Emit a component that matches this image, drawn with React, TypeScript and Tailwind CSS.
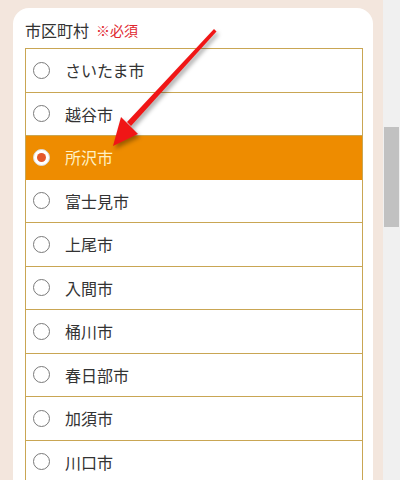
import React from 'react';

const cities = [
  'さいたま市',
  '越谷市',
  '所沢市',
  '富士見市',
  '上尾市',
  '入間市',
  '桶川市',
  '春日部市',
  '加須市',
  '川口市',
];

function Radio({ checked }: { checked: boolean }) {
  if (checked) {
    return (
      <span className="flex h-[17px] w-[17px] shrink-0 items-center justify-center rounded-full border border-[#d9d9d9] bg-white">
        <span className="h-[9px] w-[9px] rounded-full bg-[#e4572b]" />
      </span>
    );
  }
  return <span className="h-[17px] w-[17px] shrink-0 rounded-full border border-[#7a7a7a] bg-white" />;
}

export default function App() {
  return (
    <div
      className="relative flex h-[480px] w-[400px] overflow-hidden"
      style={{ fontFamily: '"Noto Sans CJK JP", "Noto Sans", sans-serif' }}
    >
      <div className="h-full w-[383px] bg-[#f3e6dd] pl-[13px] pr-[10px] pt-[8px]">
        <div className="h-full rounded-t-[16px] bg-white pl-[12px] pr-[10px] pt-[11px]">
          <div className="mb-[6px] flex h-[23px] items-center gap-[7px]">
            <span className="text-[16px] leading-[23px] text-[#333]">市区町村</span>
            <span className="text-[14px] leading-[23px] text-[#e0262e]">※必須</span>
          </div>
          <ul className="border-x border-t border-[#c9a653]">
            {cities.map((c) => {
              const sel = c === '所沢市';
              return (
                <li
                  key={c}
                  className={
                    sel
                      ? 'flex h-[43.5px] items-center gap-[15px] border-b border-[#ee8c00] bg-[#ee8c00] pl-[7px]'
                      : 'flex h-[43.5px] items-center gap-[15px] border-b border-[#c9a653] bg-white pl-[7px]'
                  }
                >
                  <Radio checked={sel} />
                  <span className={sel ? 'text-[16px] text-[#fff1c4]' : 'text-[16px] text-[#333]'}>{c}</span>
                </li>
              );
            })}
          </ul>
        </div>
      </div>
      <div className="h-full w-[17px] bg-[#f0f0f0] pt-[127px]">
        <div className="ml-[1px] h-[100px] w-[15px] bg-[#c1c1c1]" />
      </div>
      <svg
        className="pointer-events-none absolute left-0 top-0"
        width="400"
        height="480"
        style={{ filter: 'drop-shadow(2px 3px 2px rgba(0,0,0,0.35))' }}
      >
        <polygon points="214,29 216.5,31.5 131,126 127,122" fill="#f01616" />
        <polygon points="113,146 121,117 138,134" fill="#f01616" />
      </svg>
    </div>
  );
}
